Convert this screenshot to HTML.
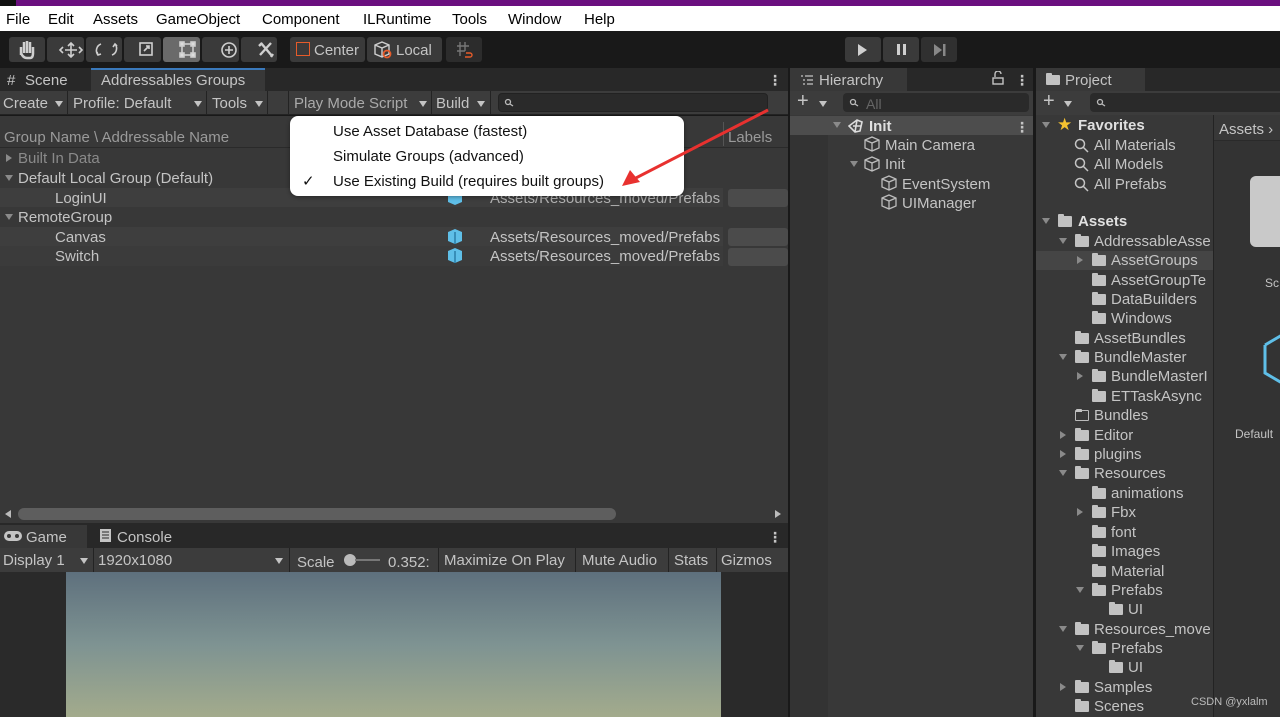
<!DOCTYPE html>
<html><head><meta charset="utf-8"><style>
*{margin:0;padding:0;box-sizing:border-box}
body{width:1280px;height:717px;overflow:hidden;background:#191919;font-family:"Liberation Sans","DejaVu Sans",sans-serif;font-size:14px;color:#c4c4c4;position:relative}
.a{position:absolute;white-space:nowrap}
.t{position:absolute;white-space:nowrap;line-height:18px;margin-top:2px}
.btn{position:absolute;top:37px;height:25px;background:#3a3a3a;border-radius:3px}
.tri{position:absolute;width:0;height:0;border-left:4px solid transparent;border-right:4px solid transparent;border-top:6px solid #8a8a8a}
.trr{position:absolute;width:0;height:0;border-top:4px solid transparent;border-bottom:4px solid transparent;border-left:6px solid #8a8a8a}
.fd{position:absolute;width:14px;height:11px;background:#c2c2c2;border-radius:1px}
.fd:before{content:"";position:absolute;left:0;top:-2px;width:6px;height:3px;background:#c2c2c2;border-radius:1px 1px 0 0}
.sep{position:absolute;width:1px;background:#232323}
.mg{position:absolute}
</style></head><body>
<div class="a" style="left:0;top:0;width:1280px;height:6px;background:#6b0f7f"></div>
<div class="a" style="left:0;top:0;width:16px;height:6px;background:#111"></div>
<div class="a" style="left:0;top:6px;width:1280px;height:25px;background:#fff;color:#000;font-size:15px">
<span class="a" style="left:6px;top:5px">File</span><span class="a" style="left:48px;top:5px">Edit</span><span class="a" style="left:93px;top:5px">Assets</span><span class="a" style="left:156px;top:5px">GameObject</span><span class="a" style="left:262px;top:5px">Component</span><span class="a" style="left:363px;top:5px">ILRuntime</span><span class="a" style="left:452px;top:5px">Tools</span><span class="a" style="left:508px;top:5px">Window</span><span class="a" style="left:584px;top:5px">Help</span></div>
<div class="btn" style="left:9px;width:36px"></div><div class="btn" style="left:47px;width:37px"></div><div class="btn" style="left:86px;width:36px"></div><div class="btn" style="left:124px;width:37px"></div><div class="btn" style="left:163px;width:37px;background:#6a6a6a"></div><div class="btn" style="left:202px;width:37px"></div><div class="btn" style="left:241px;width:36px"></div>
<svg class="a" style="left:9px;top:37px" width="270" height="25" fill="none" stroke="#cfcfcf" stroke-width="1.6">
<path d="M12 18 v-8 M15 16 v-11 M18 16 v-12 M21 16 v-11 M24 17 v-7 M12 16 q2 5 6 5 h3 q3 0 3-5" stroke-width="2.5"/>
<path d="M56 13 h12 M62 7 v12 M59 9 l3-3 3 3 M59 17 l3 3 3-3 M54 10 l-3 3 3 3 M70 10 l3 3-3 3"/>
<path d="M92 7 a7 7 0 0 0 -3 11 M103 18 a7 7 0 0 0 3-11 M88 15 l1 3 3-1 M104 10 l2-3 2 2"/>
<rect x="131" y="6" width="12" height="12"/><path d="M135 14 l5-5 M137 9 h3 v3"/>
<rect x="173" y="7" width="11" height="11"/><rect x="171" y="5" width="4" height="4" fill="#ddd"/><rect x="182" y="5" width="4" height="4" fill="#ddd"/><rect x="171" y="16" width="4" height="4" fill="#ddd"/><rect x="182" y="16" width="4" height="4" fill="#ddd"/>
<circle cx="220" cy="13" r="7"/><path d="M216 13 h8 M220 9 v8"/>
<path d="M252 6 l11 13 M262 6 l-11 12 M250 9 l3-3 M264 17 l-2 3" stroke-width="2.4"/>
</svg>
<div class="btn" style="left:290px;width:75px"></div><div class="btn" style="left:367px;width:75px"></div><div class="btn" style="left:446px;width:36px;background:#2c2c2c"></div>
<div class="a" style="left:296px;top:42px;width:14px;height:14px;border:1.5px solid #e55b2a"></div>
<span class="t" style="left:314px;top:40px;font-size:15px">Center</span>
<svg class="a" style="left:373px;top:40px" width="20" height="20" fill="none" stroke="#cfcfcf" stroke-width="1.4"><path d="M2 5 l7-3 7 3 v9 l-7 3 -7-3z M2 5 l7 3 7-3 M9 8 v9"/><circle cx="14" cy="14" r="3.5" stroke="#e55b2a" stroke-width="1.8"/></svg>
<span class="t" style="left:396px;top:40px;font-size:15px">Local</span>
<svg class="a" style="left:455px;top:40px" width="20" height="20" fill="none" stroke="#777" stroke-width="1.4"><path d="M5 2 v14 M10 2 v9 M2 6 h12 M2 11 h8"/><path d="M11 13 h4 a2 2 0 0 1 0 4 h-5" stroke="#e55b2a"/></svg>
<div class="btn" style="left:845px;width:36px"></div><div class="btn" style="left:883px;width:36px"></div><div class="btn" style="left:921px;width:36px;background:#303030"></div>
<svg class="a" style="left:845px;top:37px" width="112" height="25" fill="#cfcfcf"><path d="M13 7 l9 6 -9 6z"/><rect x="52" y="7" width="3" height="11"/><rect x="58" y="7" width="3" height="11"/><path d="M89 7 l8 6 -8 6z" fill="#888"/><rect x="98" y="7" width="2.5" height="12" fill="#888"/></svg>

<div class="a" style="left:0;top:68px;width:788px;height:23px;background:#282828"></div>
<span class="t" style="left:7px;top:70px;font-size:15px">#</span><span class="t" style="left:25px;top:70px;font-size:15px">Scene</span>
<div class="a" style="left:91px;top:68px;width:174px;height:23px;background:#383838;border-top:2px solid #3a79bb"></div>
<span class="t" style="left:101px;top:70px;font-size:15px">Addressables Groups</span>
<span class="t" style="left:768px;top:69px;font-weight:bold">⋮</span>
<div class="a" style="left:0;top:91px;width:788px;height:24px;background:#3c3c3c;border-bottom:1px solid #232323"></div>
<span class="t" style="left:3px;top:93px;font-size:15px">Create</span><div class="tri" style="left:55px;top:101px;border-top-color:#c4c4c4"></div>
<div class="sep" style="left:67px;top:91px;height:24px"></div>
<span class="t" style="left:73px;top:93px;font-size:15px">Profile: Default</span><div class="tri" style="left:194px;top:101px;border-top-color:#c4c4c4"></div>
<div class="sep" style="left:206px;top:91px;height:24px"></div>
<span class="t" style="left:212px;top:93px;font-size:15px">Tools</span><div class="tri" style="left:255px;top:101px;border-top-color:#c4c4c4"></div>
<div class="sep" style="left:267px;top:91px;height:24px"></div><div class="sep" style="left:288px;top:91px;height:24px"></div>
<span class="t" style="left:294px;top:93px;font-size:15px;color:#aaa">Play Mode Script</span><div class="tri" style="left:419px;top:101px;border-top-color:#c4c4c4"></div>
<div class="sep" style="left:431px;top:91px;height:24px"></div>
<span class="t" style="left:436px;top:93px;font-size:15px">Build</span><div class="tri" style="left:477px;top:101px;border-top-color:#c4c4c4"></div>
<div class="sep" style="left:490px;top:91px;height:24px"></div>
<div class="a" style="left:498px;top:93px;width:270px;height:19px;background:#2a2a2a;border:1px solid #222;border-radius:4px"></div>
<svg class="mg" style="left:504px;top:98px" width="12" height="10" fill="none" stroke="#bbb" stroke-width="1.3"><circle cx="4" cy="4" r="2.5"/><path d="M6 6 l3 2"/></svg>
<div class="a" style="left:0;top:116px;width:788px;height:398px;background:#383838"></div>
<span class="t" style="left:4px;top:127px;font-size:15px;color:#9a9a9a">Group Name \ Addressable Name</span>
<div class="sep" style="left:723px;top:122px;height:24px;background:#555"></div>
<span class="t" style="left:728px;top:127px;font-size:15px;color:#9a9a9a">Labels</span>
<div class="a" style="left:0;top:147px;width:788px;height:1px;background:#2a2a2a"></div>
<div class="trr" style="left:6px;top:154px"></div><span class="t" style="left:18px;top:148px;font-size:15px;color:#8a8a8a">Built In Data</span>
<div class="tri" style="left:5px;top:175px"></div><span class="t" style="left:18px;top:168px;font-size:15px">Default Local Group (Default)</span>
<div class="a" style="left:0;top:188px;width:788px;height:19px;background:#3e3e3e"></div>
<span class="t" style="left:55px;top:188px;font-size:15px">LoginUI</span>
<div class="tri" style="left:5px;top:214px"></div><span class="t" style="left:18px;top:207px;font-size:15px">RemoteGroup</span>
<div class="a" style="left:0;top:227px;width:788px;height:19px;background:#3e3e3e"></div>
<div class="a" style="left:0;top:246px;width:788px;height:20px;background:#3b3b3b"></div>
<span class="t" style="left:55px;top:227px;font-size:15px">Canvas</span><span class="t" style="left:55px;top:246px;font-size:15px">Switch</span>
<svg class="a" style="left:447px;top:190px" width="16" height="80"><path d="M1 3 l7-3 7 3 v9 l-7 3-7-3z" fill="#5fbfe8"/><path d="M1 42 l7-3 7 3 v9 l-7 3-7-3z" fill="#5fbfe8"/><path d="M1 61 l7-3 7 3 v9 l-7 3-7-3z" fill="#5fbfe8"/><path d="M8 42 v12 M8 61 v12" stroke="#2b7fa8" stroke-width="1.5"/></svg>
<span class="t" style="left:490px;top:188px;font-size:15px;color:#b0b0b0">Assets/Resources_moved/Prefabs</span>
<span class="t" style="left:490px;top:227px;font-size:15px">Assets/Resources_moved/Prefabs</span>
<span class="t" style="left:490px;top:246px;font-size:15px">Assets/Resources_moved/Prefabs</span>
<div class="a" style="left:723px;top:186px;width:65px;height:80px;background:#383838"></div>
<div class="a" style="left:728px;top:189px;width:60px;height:18px;background:#4b4b4b;border-radius:3px"></div>
<div class="a" style="left:728px;top:228px;width:60px;height:18px;background:#4b4b4b;border-radius:3px"></div>
<div class="a" style="left:728px;top:248px;width:60px;height:18px;background:#4b4b4b;border-radius:3px"></div>
<div class="a" style="left:290px;top:116px;width:394px;height:80px;background:#fff;border-radius:8px;box-shadow:0 1px 4px rgba(0,0,0,.4)"></div>
<span class="t" style="left:333px;top:121px;font-size:15px;color:#111">Use Asset Database (fastest)</span>
<span class="t" style="left:333px;top:146px;font-size:15px;color:#111">Simulate Groups (advanced)</span>
<span class="t" style="left:302px;top:171px;font-size:15px;color:#111">✓</span>
<span class="t" style="left:333px;top:171px;font-size:15px;color:#111">Use Existing Build (requires built groups)</span>
<svg class="a" style="left:600px;top:100px" width="190" height="100"><path d="M168 10 L32 80" stroke="#e8312f" stroke-width="3"/><path d="M22 86 L30 70 L40 82z" fill="#e8312f"/></svg>
<div class="a" style="left:0;top:505px;width:788px;height:18px;background:#383838"></div>
<div class="a" style="left:18px;top:508px;width:598px;height:12px;background:#5e5e5e;border-radius:6px"></div>
<div class="trr" style="left:775px;top:510px;border-left-color:#bbb"></div>
<div class="a" style="left:5px;top:510px;border-top:4px solid transparent;border-bottom:4px solid transparent;border-right:6px solid #bbb;width:0;height:0"></div>
<div class="a" style="left:0;top:523px;width:788px;height:25px;background:#282828"></div>
<div class="a" style="left:0;top:525px;width:87px;height:23px;background:#383838"></div>
<svg class="a" style="left:4px;top:530px" width="20" height="12"><rect x="0" y="1" width="18" height="10" rx="5" fill="#c4c4c4"/><circle cx="5" cy="6" r="2" fill="#383838"/><circle cx="13" cy="6" r="2" fill="#383838"/></svg>
<span class="t" style="left:26px;top:527px;font-size:15px">Game</span>
<svg class="a" style="left:100px;top:529px" width="12" height="14"><rect x="0" y="0" width="11" height="13" fill="#c4c4c4"/><path d="M2 3h7M2 6h7M2 9h7" stroke="#282828"/></svg>
<span class="t" style="left:117px;top:527px;font-size:15px">Console</span>
<span class="t" style="left:768px;top:526px;font-weight:bold">⋮</span>
<div class="a" style="left:0;top:548px;width:788px;height:24px;background:#3c3c3c"></div>
<span class="t" style="left:3px;top:550px;font-size:15px">Display 1</span><div class="tri" style="left:80px;top:558px;border-top-color:#c4c4c4"></div>
<div class="sep" style="left:93px;top:548px;height:24px"></div>
<span class="t" style="left:98px;top:550px;font-size:15px">1920x1080</span><div class="tri" style="left:275px;top:558px;border-top-color:#c4c4c4"></div>
<div class="sep" style="left:289px;top:548px;height:24px"></div>
<span class="t" style="left:297px;top:552px;font-size:15px">Scale</span>
<div class="a" style="left:344px;top:554px;width:12px;height:12px;border-radius:6px;background:#bbb"></div><div class="a" style="left:355px;top:559px;width:25px;height:2px;background:#777"></div>
<span class="t" style="left:388px;top:552px;font-size:15px">0.352:</span>
<div class="sep" style="left:438px;top:548px;height:24px"></div>
<span class="t" style="left:444px;top:550px;font-size:15px">Maximize On Play</span>
<div class="sep" style="left:575px;top:548px;height:24px"></div>
<span class="t" style="left:582px;top:550px;font-size:15px">Mute Audio</span>
<div class="sep" style="left:668px;top:548px;height:24px"></div>
<span class="t" style="left:674px;top:550px;font-size:15px">Stats</span>
<div class="sep" style="left:716px;top:548px;height:24px"></div>
<span class="t" style="left:721px;top:550px;font-size:15px">Gizmos</span>
<div class="a" style="left:0;top:572px;width:788px;height:145px;background:#2a2a2a"></div>
<div class="a" style="left:66px;top:572px;width:655px;height:145px;background:linear-gradient(#5e707d,#7e9392 50%,#a3ab8c)"></div>
<div class="a" style="left:788px;top:68px;width:2px;height:649px;background:#191919"></div>

<div class="a" style="left:790px;top:68px;width:243px;height:23px;background:#282828"></div>
<div class="a" style="left:790px;top:68px;width:117px;height:23px;background:#383838"></div>
<svg class="a" style="left:800px;top:74px" width="14" height="12" stroke="#c4c4c4" stroke-width="1.3"><path d="M1 2h2M5 2h8M3 6h2M7 6h6M3 10h2M7 10h6"/></svg>
<span class="t" style="left:819px;top:70px;font-size:15px">Hierarchy</span>
<svg class="a" style="left:992px;top:71px" width="12" height="14" fill="none" stroke="#c4c4c4" stroke-width="1.4"><path d="M3 6 v-3 a3 3 0 0 1 6 0"/><rect x="1" y="7" width="10" height="6"/></svg>
<span class="t" style="left:1015px;top:69px;font-weight:bold">⋮</span>
<div class="a" style="left:790px;top:91px;width:243px;height:24px;background:#3c3c3c"></div>
<span class="t" style="left:797px;top:90px;font-size:20px">+</span><div class="tri" style="left:819px;top:101px;border-top-color:#c4c4c4"></div>
<div class="a" style="left:843px;top:93px;width:186px;height:19px;background:#2a2a2a;border-radius:4px"></div>
<span class="t" style="left:866px;top:93px;font-size:14px;color:#666">All</span>
<svg class="mg" style="left:849px;top:98px" width="12" height="10" fill="none" stroke="#bbb" stroke-width="1.3"><circle cx="4" cy="4" r="2.5"/><path d="M6 6 l3 2"/></svg>
<div class="a" style="left:790px;top:115px;width:243px;height:602px;background:#383838"></div>
<div class="a" style="left:790px;top:133px;width:38px;height:584px;background:#333"></div>
<div class="a" style="left:790px;top:116px;width:243px;height:19px;background:#4d4d4d"></div>
<div class="tri" style="left:833px;top:122px"></div>
<svg class="a" style="left:848px;top:118px" width="16" height="16" fill="none" stroke="#ddd" stroke-width="1.6"><path d="M1 8 l8-6 5 2 -2 9 -5 1z M5 8 h8 M9 2 l-2 12"/></svg>
<span class="t" style="left:869px;top:116px;font-size:15px;font-weight:bold;color:#e0e0e0">Init</span><span class="t" style="left:1015px;top:116px;font-weight:bold">⋮</span>
<svg class="a" style="left:864px;top:136px" width="40" height="80" fill="none" stroke="#bdbdbd" stroke-width="1.3"><path d="M1 4 l7-3 7 3 v8 l-7 3-7-3z M1 4 l7 3 7-3 M8 7 v8"/><path d="M1 24 l7-3 7 3 v8 l-7 3-7-3z M1 24 l7 3 7-3 M8 27 v8"/><path d="M18 43 l7-3 7 3 v8 l-7 3-7-3z M18 43 l7 3 7-3 M25 46 v8"/><path d="M18 62 l7-3 7 3 v8 l-7 3-7-3z M18 62 l7 3 7-3 M25 65 v8"/></svg>
<span class="t" style="left:885px;top:135px;font-size:15px">Main Camera</span>
<div class="tri" style="left:850px;top:161px"></div><span class="t" style="left:885px;top:154px;font-size:15px">Init</span>
<span class="t" style="left:902px;top:174px;font-size:15px">EventSystem</span>
<span class="t" style="left:902px;top:193px;font-size:15px">UIManager</span>
<div class="a" style="left:1033px;top:68px;width:3px;height:649px;background:#191919"></div>

<div class="a" style="left:1036px;top:68px;width:244px;height:23px;background:#282828"></div>
<div class="a" style="left:1036px;top:68px;width:109px;height:23px;background:#383838"></div>
<div class="fd" style="left:1046px;top:75px;height:10px"></div><span class="t" style="left:1065px;top:70px;font-size:15px">Project</span>
<div class="a" style="left:1036px;top:91px;width:244px;height:24px;background:#3c3c3c"></div>
<span class="t" style="left:1043px;top:90px;font-size:20px">+</span><div class="tri" style="left:1064px;top:101px;border-top-color:#c4c4c4"></div>
<div class="a" style="left:1090px;top:93px;width:195px;height:19px;background:#2a2a2a;border-radius:4px"></div>
<svg class="mg" style="left:1096px;top:98px" width="12" height="10" fill="none" stroke="#bbb" stroke-width="1.3"><circle cx="4" cy="4" r="2.5"/><path d="M6 6 l3 2"/></svg>
<div class="a" style="left:1036px;top:115px;width:177px;height:602px;background:#383838"></div>
<div class="a" style="left:1213px;top:115px;width:1px;height:602px;background:#232323"></div>
<div class="a" style="left:1214px;top:115px;width:66px;height:602px;background:#333"></div>
<div class="a" style="left:1214px;top:115px;width:66px;height:26px;background:#383838;border-bottom:1px solid #2a2a2a"></div>
<span class="t" style="left:1219px;top:119px;font-size:15px">Assets ›</span>
<div class="a" style="left:1250px;top:176px;width:40px;height:71px;background:#c9c9c9;border-radius:6px"></div>
<span class="t" style="left:1265px;top:272px;font-size:12px">Sc</span>
<svg class="a" style="left:1262px;top:330px" width="20" height="60" fill="none" stroke="#5fbfe8" stroke-width="3"><path d="M3 15 l17-10 M3 15 v28 l17 10"/></svg>
<span class="t" style="left:1235px;top:423px;font-size:12px">Default</span>
<div class="a" style="left:1036px;top:251px;width:177px;height:19px;background:#454545"></div>
<svg class="a" style="left:1074px;top:138px" width="16" height="60" fill="none" stroke="#c4c4c4" stroke-width="1.5"><circle cx="6" cy="6" r="4.5"/><path d="M9 9 l5 5"/><circle cx="6" cy="25" r="4.5"/><path d="M9 28 l5 5"/><circle cx="6" cy="45" r="4.5"/><path d="M9 48 l5 5"/></svg>
<div class="tri" style="left:1042px;top:122px"></div><span class="t" style="left:1057px;top:114px;font-size:17px;color:#f4c230">★</span><span class="t" style="left:1078px;top:115px;font-size:15px;font-weight:bold;color:#e0e0e0">Favorites</span>
<span class="t" style="left:1094px;top:135px;font-size:15px">All Materials</span>
<span class="t" style="left:1094px;top:154px;font-size:15px">All Models</span>
<span class="t" style="left:1094px;top:174px;font-size:15px">All Prefabs</span>
<div class="tri" style="left:1042px;top:218px"></div><div class="fd" style="left:1058px;top:216px"></div><span class="t" style="left:1078px;top:211px;font-size:15px;font-weight:bold;color:#e0e0e0">Assets</span>
<div class="tri" style="left:1059px;top:238px"></div><div class="fd" style="left:1075px;top:236px"></div><span class="t" style="left:1094px;top:231px;font-size:15px">AddressableAsse</span>
<div class="trr" style="left:1077px;top:256px"></div><div class="fd" style="left:1092px;top:255px"></div><span class="t" style="left:1111px;top:250px;font-size:15px">AssetGroups</span>
<div class="fd" style="left:1092px;top:275px"></div><span class="t" style="left:1111px;top:270px;font-size:15px">AssetGroupTe</span>
<div class="fd" style="left:1092px;top:294px"></div><span class="t" style="left:1111px;top:289px;font-size:15px">DataBuilders</span>
<div class="fd" style="left:1092px;top:313px"></div><span class="t" style="left:1111px;top:308px;font-size:15px">Windows</span>
<div class="fd" style="left:1075px;top:333px"></div><span class="t" style="left:1094px;top:328px;font-size:15px">AssetBundles</span>
<div class="tri" style="left:1059px;top:354px"></div><div class="fd" style="left:1075px;top:352px"></div><span class="t" style="left:1094px;top:347px;font-size:15px">BundleMaster</span>
<div class="trr" style="left:1077px;top:372px"></div><div class="fd" style="left:1092px;top:371px"></div><span class="t" style="left:1111px;top:366px;font-size:15px">BundleMasterI</span>
<div class="fd" style="left:1092px;top:391px"></div><span class="t" style="left:1111px;top:386px;font-size:15px">ETTaskAsync</span>
<div class="fd" style="left:1075px;top:410px;background:none;border:1px solid #bbb"></div><span class="t" style="left:1094px;top:405px;font-size:15px">Bundles</span>
<div class="trr" style="left:1060px;top:431px"></div><div class="fd" style="left:1075px;top:430px"></div><span class="t" style="left:1094px;top:425px;font-size:15px">Editor</span>
<div class="trr" style="left:1060px;top:450px"></div><div class="fd" style="left:1075px;top:449px"></div><span class="t" style="left:1094px;top:444px;font-size:15px">plugins</span>
<div class="tri" style="left:1059px;top:470px"></div><div class="fd" style="left:1075px;top:468px"></div><span class="t" style="left:1094px;top:463px;font-size:15px">Resources</span>
<div class="fd" style="left:1092px;top:488px"></div><span class="t" style="left:1111px;top:483px;font-size:15px">animations</span>
<div class="trr" style="left:1077px;top:508px"></div><div class="fd" style="left:1092px;top:507px"></div><span class="t" style="left:1111px;top:502px;font-size:15px">Fbx</span>
<div class="fd" style="left:1092px;top:527px"></div><span class="t" style="left:1111px;top:522px;font-size:15px">font</span>
<div class="fd" style="left:1092px;top:546px"></div><span class="t" style="left:1111px;top:541px;font-size:15px">Images</span>
<div class="fd" style="left:1092px;top:566px"></div><span class="t" style="left:1111px;top:561px;font-size:15px">Material</span>
<div class="tri" style="left:1076px;top:587px"></div><div class="fd" style="left:1092px;top:585px"></div><span class="t" style="left:1111px;top:580px;font-size:15px">Prefabs</span>
<div class="fd" style="left:1109px;top:604px"></div><span class="t" style="left:1128px;top:599px;font-size:15px">UI</span>
<div class="tri" style="left:1059px;top:626px"></div><div class="fd" style="left:1075px;top:624px"></div><span class="t" style="left:1094px;top:619px;font-size:15px">Resources_move</span>
<div class="tri" style="left:1076px;top:645px"></div><div class="fd" style="left:1092px;top:643px"></div><span class="t" style="left:1111px;top:638px;font-size:15px">Prefabs</span>
<div class="fd" style="left:1109px;top:662px"></div><span class="t" style="left:1128px;top:657px;font-size:15px">UI</span>
<div class="trr" style="left:1060px;top:683px"></div><div class="fd" style="left:1075px;top:682px"></div><span class="t" style="left:1094px;top:677px;font-size:15px">Samples</span>
<div class="fd" style="left:1075px;top:701px"></div><span class="t" style="left:1094px;top:696px;font-size:15px">Scenes</span>
<span class="t" style="left:1191px;top:691px;font-size:11px;color:#bbb">CSDN @yxlalm</span>
</body></html>
